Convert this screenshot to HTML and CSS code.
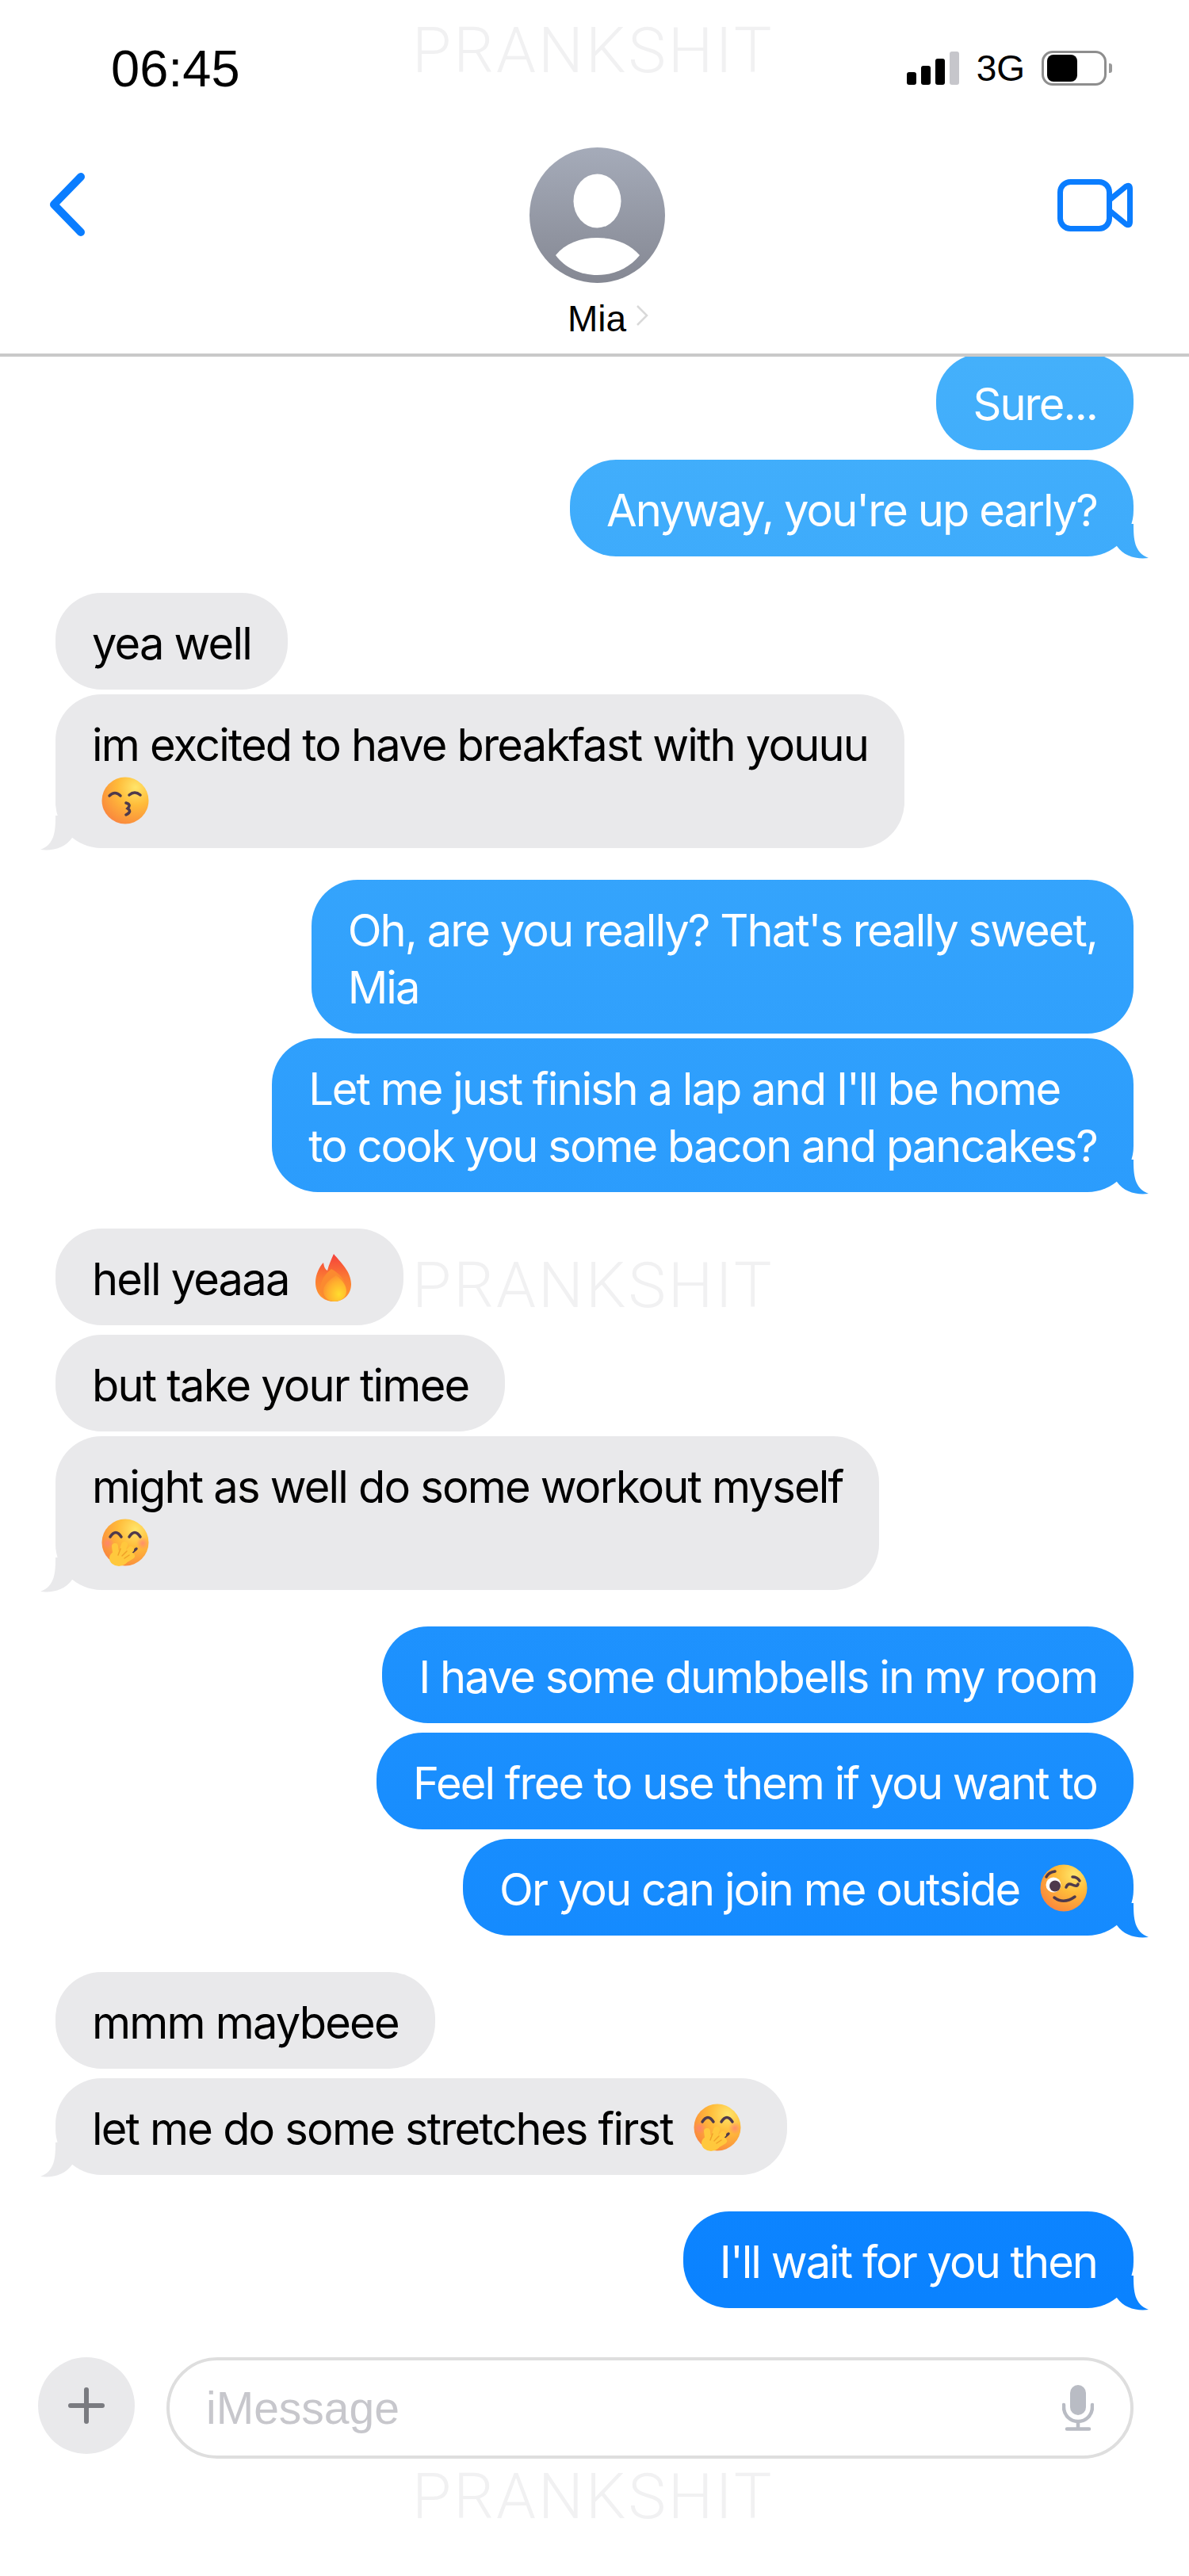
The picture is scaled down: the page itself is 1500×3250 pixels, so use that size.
FILE: index.html
```html
<!DOCTYPE html>
<html lang="en">
<head>
  <meta charset="UTF-8" />
  <meta name="viewport" content="width=device-width, initial-scale=1" />
  <title>Mia - Messages</title>
  <link rel="stylesheet" href="styles.css">
</head>
<body>
  <!-- emoji drawn once, reused below -->
  <svg class="sprite" aria-hidden="true">
    <defs>
      <radialGradient id="faceFill" cx="0.72" cy="0.22" r="0.95">
        <stop offset="0" stop-color="#ffe56a" />
        <stop offset="0.4" stop-color="#ffbc3a" />
        <stop offset="0.85" stop-color="#fa8d3c" />
        <stop offset="1" stop-color="#f97a5a" />
      </radialGradient>
      <linearGradient id="flameOuter" x1="0.5" y1="0" x2="0.5" y2="1">
        <stop offset="0" stop-color="#f5403c" />
        <stop offset="0.5" stop-color="#fb7a33" />
        <stop offset="1" stop-color="#ff9a2e" />
      </linearGradient>
      <radialGradient id="flameInner" cx="0.68" cy="0.72" r="0.8">
        <stop offset="0" stop-color="#ffdc2e" />
        <stop offset="0.6" stop-color="#ffb02e" />
        <stop offset="1" stop-color="#fb8a30" />
      </radialGradient>
      <radialGradient id="cheek">
        <stop offset="0" stop-color="#ff7d7a" stop-opacity="0.75" />
        <stop offset="1" stop-color="#ff7d7a" stop-opacity="0" />
      </radialGradient>
      <symbol id="emojiKiss" viewBox="0 0 60 60">
        <circle cx="30" cy="30" r="29.5" fill="url(#faceFill)" />
        <path class="face-line" d="M10 24Q17 17 24 24M35 23Q42 17 49 23" />
        <path class="face-line" d="M31 33Q38 35 33 40Q39 44 31 48" />
      </symbol>
      <symbol id="emojiHush" viewBox="0 0 60 60">
        <circle cx="30" cy="30" r="29.5" fill="url(#faceFill)" />
        <circle cx="8" cy="31" r="8" fill="url(#cheek)" />
        <circle cx="52" cy="31" r="8" fill="url(#cheek)" />
        <path class="face-line" d="M11 23Q18 12 25 23M35 23Q42 12 49 23" />
        <path class="face-line" d="M37 44L44 38" />
        <path class="hand" d="M19 50L17 35M23 50L29 33M26 50L37 39M28 53L38 47" />
        <ellipse cx="22" cy="50" rx="12" ry="10" fill="#ffc83d" />
        <path class="hand-crease" d="M21 46L24 38M26 47L32 41M29 50L35 46" />
      </symbol>
      <symbol id="emojiWink" viewBox="0 0 60 60">
        <circle cx="30" cy="30" r="29.5" fill="url(#faceFill)" />
        <circle cx="17" cy="26" r="9.5" fill="#fff" />
        <circle cx="19" cy="27.500" r="7" fill="#4e3a4c" />
        <path class="face-line" d="M8 16Q11 10 19 9M41 16Q47 16 50 21" />
        <path class="face-line" d="M33 29Q35 23 41 26T48 25" />
        <path class="face-line" d="M18 42Q30 51 44 41" />
      </symbol>
      <symbol id="emojiFire" viewBox="0 0 60 60">
        <path d="M30 0C38 10 52 22 52 38C52 52 42 60 30 60C17 60 7 51 7 36C7 26 12 16 17 11C18 17 19 19 22 21C24 13 27 7 30 0Z" fill="url(#flameOuter)" />
        <path d="M27 19C37 24 46 34 46 45C46 54 39 60 30 60C22 60 15 55 13 47C12 36 18 26 27 19Z" fill="#fb8a30" />
        <path d="M33 27C41 33 46 40 46 47C46 55 39 60 31 60C23 60 17 54 17 47C17 39 24 33 33 27Z" fill="url(#flameInner)" />
      </symbol>
    </defs>
  </svg>

  <div class="watermark watermark-top">PRANKSHIT</div>
  <div class="watermark watermark-mid">PRANKSHIT</div>
  <div class="watermark watermark-bottom">PRANKSHIT</div>

  <header class="top">
    <div class="status">
      <span class="time">06:45</span>
      <div class="status-right">
        <div class="signal">
          <span class="bar bar1"></span>
          <span class="bar bar2"></span>
          <span class="bar bar3"></span>
          <span class="bar bar4"></span>
        </div>
        <span class="network">3G</span>
        <div class="battery"><span class="battery-level"></span></div>
        <span class="battery-nub"></span>
      </div>
    </div>
    <div class="nav">
      <svg class="back" viewBox="0 0 46 80" aria-label="Back">
        <path d="M40 5L6 40L40 75" />
      </svg>
      <div class="contact">
        <svg class="avatar" viewBox="0 0 171 171">
          <defs>
            <linearGradient id="avatarFill" x1="0" y1="0" x2="0" y2="1">
              <stop offset="0" stop-color="#a5abb9" />
              <stop offset="1" stop-color="#858893" />
            </linearGradient>
          </defs>
          <circle cx="85.5" cy="85.5" r="85.5" fill="url(#avatarFill)" />
          <ellipse cx="85.5" cy="67.500" rx="30" ry="34" fill="#fff" />
          <path d="M33 136C45 121 64 114 85.500 114C107 114 126 121 139 136C126 152 107 161 85.500 161C64 161 45 152 33 136Z" fill="#fff" />
        </svg>
        <div class="contact-name">
          <span>Mia</span>
          <svg class="name-chevron" viewBox="0 0 16 26"><path d="M2 1L14 13L2 25" /></svg>
        </div>
      </div>
      <svg class="video" viewBox="0 0 96 66" aria-label="FaceTime">
        <rect x="3.5" y="3.5" width="62" height="59" rx="13" />
        <path d="M66 26L86 9.5Q91.500 6 91.500 12V54Q91.500 60 86 56.500L66 40" />
      </svg>
    </div>
  </header>

  <main class="chat">
    <div class="bubble out first">Sure...</div>
    <div class="bubble out tail gap-m">Anyway, you're up early?</div>

    <div class="bubble in gap-l">yea well</div>
    <div class="bubble in tail gap-xs">im excited to have breakfast with youuu<br><svg class="emoji"><use href="#emojiKiss" /></svg></div>

    <div class="bubble out gap-ml">Oh, are you really? That's really sweet,<br>Mia</div>
    <div class="bubble out tail gap-xs">Let me just finish a lap and I'll be home<br>to cook you some bacon and pancakes?</div>

    <div class="bubble in gap-l">hell yeaaa <svg class="emoji"><use href="#emojiFire" /></svg></div>
    <div class="bubble in gap-m">but take your timee</div>
    <div class="bubble in tail gap-xs">might as well do some workout myself<br><svg class="emoji"><use href="#emojiHush" /></svg></div>

    <div class="bubble out gap-l">I have some dumbbells in my room</div>
    <div class="bubble out gap-m">Feel free to use them if you want to</div>
    <div class="bubble out tail gap-m">Or you can join me outside <svg class="emoji"><use href="#emojiWink" /></svg></div>

    <div class="bubble in gap-l">mmm maybeee</div>
    <div class="bubble in tail gap-m">let me do some stretches first <svg class="emoji"><use href="#emojiHush" /></svg></div>

    <div class="bubble out tail gap-l">I'll wait for you then</div>
  </main>

  <footer class="composer">
    <div class="plus"><span class="plus-h"></span><span class="plus-v"></span></div>
    <div class="input">
      <span class="placeholder">iMessage</span>
      <svg class="mic" viewBox="0 0 40 58">
        <rect x="10" y="0" width="20" height="38" rx="10" class="mic-body" />
        <path d="M2 25V28C2 38 10 46 20 46C30 46 38 38 38 28V25M20 46V55M6 55.500H34" />
      </svg>
    </div>
  </footer>
</body>
</html>
```

FILE: styles.css
```css
* {
  box-sizing: border-box;
}

body {
  margin: 0;
  width: 1500px;
  height: 3250px;
  display: flex;
  flex-direction: column;
  overflow: hidden;
  position: relative;
  background: #fff;
  color: #000;
  font-family: 'Inter', 'Liberation Sans', sans-serif;
}

.sprite {
  position: absolute;
  width: 0;
  height: 0;
}

/* watermark sits over the page, does not take part in the flow */
.watermark {
  position: absolute;
  left: 520px;
  font-family: 'Roboto', sans-serif;
  font-weight: 300;
  font-size: 80px;
  line-height: 60px;
  letter-spacing: 3px;
  color: #f1f1f2;
  z-index: 5;
}

.watermark-top { top: 34px; }
.watermark-mid { top: 1592px; }
.watermark-bottom { top: 3120px; }

/* header */
.top {
  height: 450px;
  flex: none;
  border-bottom: 4px solid #c9c9c9;
}

.status {
  height: 172px;
  display: flex;
  align-items: center;
  justify-content: space-between;
  padding: 0 97px 0 140px;
  font-family: 'Liberation Sans', sans-serif;
}

.time {
  font-size: 65px;
  line-height: 1;
}

.status-right {
  display: flex;
  align-items: center;
}

.signal {
  display: flex;
  align-items: flex-end;
  gap: 6px;
  height: 42px;
  margin-right: 22px;
}

.bar {
  width: 12px;
  background: #000;
  border-radius: 3px;
}

.bar1 { height: 16px; }
.bar2 { height: 24px; }
.bar3 { height: 33px; }
.bar4 { height: 42px; background: #c6c6cb; }

.network {
  font-size: 46px;
  line-height: 1;
  margin-right: 21px;
}

.battery {
  width: 82px;
  height: 44px;
  border: 3px solid #8e8e8e;
  border-radius: 14px;
  padding: 2px 4px;
}

.battery-level {
  display: block;
  width: 38px;
  height: 34px;
  background: #000;
  border-radius: 8px;
}

.battery-nub {
  width: 4px;
  height: 12px;
  margin-left: 3px;
  background: #9a9a9a;
  border-radius: 0 3px 3px 0;
}

.nav {
  display: grid;
  grid-template-columns: 1fr auto 1fr;
  padding-top: 14px;
}

.back {
  width: 46px;
  height: 80px;
  margin: 32px 0 0 62px;
  fill: none;
  stroke: #0a7dff;
  stroke-width: 10;
  stroke-linecap: round;
  stroke-linejoin: round;
}

.contact {
  display: flex;
  flex-direction: column;
  align-items: center;
  margin-left: 6px;
}

.avatar {
  width: 171px;
  height: 171px;
  display: block;
}

.contact-name {
  position: relative;
  margin-top: 20px;
  font-family: 'Liberation Sans', sans-serif;
  font-size: 46px;
  line-height: 50px;
}

.name-chevron {
  position: absolute;
  left: 86px;
  top: 8px;
  width: 16px;
  height: 26px;
  fill: none;
  stroke: #d9d9d9;
  stroke-width: 2.5;
}

.video {
  justify-self: end;
  width: 96px;
  height: 66px;
  margin: 40px 70px 0 0;
  fill: none;
  stroke: #0a7dff;
  stroke-width: 7;
}

/* messages */
.chat {
  flex: 1;
  display: flex;
  flex-direction: column;
  padding: 0 70px;
  overflow: hidden;
}

.bubble {
  position: relative;
  width: fit-content;
  padding: 28px 46px 22px;
  border-radius: 58px;
  font-size: 56px;
  line-height: 72px;
  letter-spacing: -1.8px;
  white-space: nowrap;
}

.out {
  align-self: flex-end;
  color: #fff;
  letter-spacing: -1.95px;
  background: linear-gradient(180deg, #44b0fb 450px, #0a82ff 2900px) fixed;
}

.in {
  align-self: flex-start;
  background: #e9e9eb;
}

.first { margin-top: -4px; }
.gap-xs { margin-top: 6px; }
.gap-m { margin-top: 12px; }
.gap-ml { margin-top: 40px; }
.gap-l { margin-top: 46px; }

.tail::after {
  content: '';
  position: absolute;
  bottom: -3px;
  width: 52px;
  height: 44px;
  background: inherit;
  clip-path: path('M32 0C32 20 33 36 51 43C36 45 20 41 11 28L11 0Z');
}

.out.tail::after { right: -20px; }

.in.tail::after {
  left: -20px;
  transform: scaleX(-1);
}

.emoji {
  width: 60px;
  height: 60px;
  margin: 0 12px;
  vertical-align: -8px;
}

.face-line {
  fill: none;
  stroke: #4e3a4c;
  stroke-width: 3.5;
  stroke-linecap: round;
}

.hand {
  fill: none;
  stroke: #ffc83d;
  stroke-width: 8;
  stroke-linecap: round;
}

.hand-crease {
  fill: none;
  stroke: #f0a028;
  stroke-width: 1.5;
  stroke-linecap: round;
}

/* composer */
.composer {
  height: 276px;
  flex: none;
  display: flex;
  align-items: flex-start;
  gap: 40px;
  padding: 0 70px 0 48px;
}

.plus {
  position: relative;
  width: 122px;
  height: 122px;
  flex: none;
  border-radius: 50%;
  background: #e9e9eb;
}

.plus-h,
.plus-v {
  position: absolute;
  background: #7a7b80;
  border-radius: 3px;
}

.plus-h { left: 38px; top: 58px; width: 46px; height: 6px; }
.plus-v { left: 58px; top: 38px; width: 6px; height: 46px; }

.input {
  flex: 1;
  height: 128px;
  display: flex;
  align-items: center;
  justify-content: space-between;
  padding: 0 46px 0 46px;
  border: 4px solid #dedede;
  border-radius: 64px;
}

.placeholder {
  font-family: 'Liberation Sans', sans-serif;
  font-size: 57px;
  color: #c7c7cc;
}

.mic {
  width: 40px;
  height: 58px;
  fill: none;
  stroke: #b9bcc4;
  stroke-width: 4.5;
  stroke-linecap: round;
}

.mic-body {
  fill: #b9bcc4;
  stroke: none;
}
```
